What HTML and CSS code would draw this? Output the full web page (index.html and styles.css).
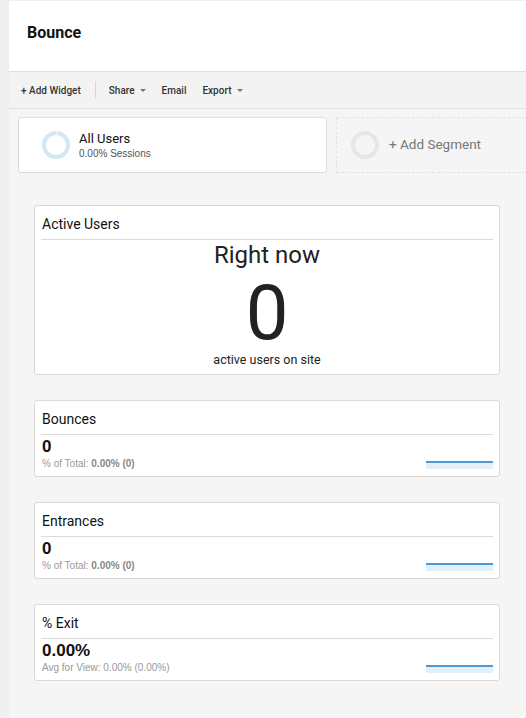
FILE: index.html
```html
<!DOCTYPE html>
<html lang="en">
<head>
    <meta charset="UTF-8">
    <meta name="viewport" content="width=device-width, initial-scale=1.0">
    <title>Bounce</title>
    <link rel="stylesheet" href="styles.css">
</head>
<body>

<div class="page">
    <header class="report-header">
        <h1>Bounce</h1>
    </header>

    <nav class="toolbar">
        <span class="tool">+ Add Widget</span>
        <span class="tool-sep"></span>
        <span class="tool">Share <span class="caret"></span></span>
        <span class="tool">Email</span>
        <span class="tool">Export <span class="caret"></span></span>
    </nav>

    <main>
        <div class="segments">
            <div class="segment">
                <svg class="ring" width="30" height="30" viewBox="0 0 30 30">
                    <circle cx="15" cy="15" r="12" fill="none" stroke="#d3e7f4" stroke-width="4"/>
                    <path d="M15 3 A12 12 0 0 1 17 3.2" fill="none" stroke="#e6f1f9" stroke-width="4"/>
                </svg>
                <div class="segment-text">
                    <div class="segment-name">All Users</div>
                    <div class="segment-sub">0.00% Sessions</div>
                </div>
            </div>
            <div class="segment add">
                <svg class="ring" width="30" height="30" viewBox="0 0 30 30">
                    <circle cx="15" cy="15" r="12" fill="none" stroke="#e6e6e6" stroke-width="4"/>
                </svg>
                <span class="add-label">+ Add Segment</span>
            </div>
        </div>

        <div class="widgets">
            <div class="widget">
                <div class="widget-title">Active Users</div>
                <div class="realtime">
                    <div class="rt-label">Right now</div>
                    <div class="rt-count">0</div>
                    <div class="rt-sub">active users on site</div>
                </div>
            </div>

            <div class="widget">
                <div class="widget-title">Bounces</div>
                <div class="metric">
                    <div>
                        <div class="metric-value">0</div>
                        <div class="metric-sub">% of Total: <b>0.00% (0)</b></div>
                    </div>
                    <div class="spark"></div>
                </div>
            </div>

            <div class="widget">
                <div class="widget-title">Entrances</div>
                <div class="metric">
                    <div>
                        <div class="metric-value">0</div>
                        <div class="metric-sub">% of Total: <b>0.00% (0)</b></div>
                    </div>
                    <div class="spark"></div>
                </div>
            </div>

            <div class="widget">
                <div class="widget-title">% Exit</div>
                <div class="metric">
                    <div>
                        <div class="metric-value">0.00%</div>
                        <div class="metric-sub">Avg for View: 0.00% (0.00%)</div>
                    </div>
                    <div class="spark"></div>
                </div>
            </div>
        </div>
    </main>
</div>

</body>
</html>
```

FILE: styles.css
```css
body {
    font-family: Roboto, Arial, sans-serif;
    margin: 0;
    background-color: #efefef;
    color: #222;
}
.page {
    margin-left: 9px;
    padding-top: 1px;
    min-height: 717px;
    display: flex;
    flex-direction: column;
}
.report-header {
    background-color: white;
    height: 71px;
    box-sizing: border-box;
    border-bottom: 1px solid #dedede;
    padding: 22px 0 0 18px;
}
.report-header h1 {
    margin: 0;
    font-size: 16px;
    line-height: 19px;
    font-weight: bold;
    color: #111;
}
.toolbar {
    background-color: #f3f3f3;
    height: 36px;
    border-bottom: 1px solid #e2e2e2;
    display: flex;
    align-items: center;
    padding-left: 12px;
    font-size: 10px;
    font-weight: 500;
    color: #333;
}
.tool {
    margin-right: 16px;
    display: flex;
    align-items: center;
}
.tool-sep {
    width: 1px;
    height: 18px;
    background-color: #d6d6d6;
    margin-right: 13px;
    margin-left: -2px;
}
.caret {
    display: inline-block;
    margin-left: 5px;
    border-left: 3.5px solid transparent;
    border-right: 3.5px solid transparent;
    border-top: 3.5px solid #777;
}
main {
    flex: 1;
    background-color: #f5f5f5;
    padding: 8px 0 20px 9px;
}
.segments {
    display: flex;
    gap: 9px;
}
.segment {
    width: 309px;
    height: 56px;
    box-sizing: border-box;
    background-color: white;
    border: 1px solid #dcdcdc;
    border-radius: 3px;
    display: flex;
    align-items: center;
    padding-left: 22px;
}
.segment.add {
    flex: 1;
    width: auto;
    padding-left: 13px;
    background-color: transparent;
    border: 1px dashed #e2e2e2;
    border-right: none;
    border-radius: 0;
}
.ring {
    margin-right: 8px;
}
.segment-name {
    font-size: 13px;
    color: #111;
    line-height: 16px;
}
.segment-sub {
    font-family: Arial, sans-serif;
    font-size: 10px;
    color: #555;
    line-height: 13px;
}
.add-label {
    font-size: 13.5px;
    color: #777;
    margin-left: 1px;
    margin-top: -3px;
}
.widgets {
    margin: 32px 26px 0 16px;
    display: flex;
    flex-direction: column;
    gap: 25px;
}
.widget {
    background-color: white;
    border: 1px solid #d9d9d9;
    border-radius: 3px;
    padding: 0 6px 6px 6px;
}
.widget-title {
    font-size: 14px;
    line-height: 17px;
    padding: 10px 0 6px 1px;
    border-bottom: 1px solid #dadada;
    color: #111;
}
.realtime {
    text-align: center;
}
.rt-label {
    font-size: 24px;
    line-height: 28px;
    margin-top: 1px;
    color: #222;
}
.rt-count {
    font-size: 76px;
    line-height: 70px;
    margin-top: 9px;
    color: #222;
}
.rt-sub {
    font-size: 12.5px;
    line-height: 16px;
    margin-top: 4px;
    color: #222;
}
.metric {
    display: flex;
    justify-content: space-between;
    align-items: flex-end;
    padding-left: 1px;
}
.metric-value {
    font-family: Arial, sans-serif;
    font-size: 17px;
    font-weight: bold;
    line-height: 20px;
    margin-top: 2px;
    color: #111;
}
.metric-sub {
    font-family: Arial, sans-serif;
    font-size: 10px;
    line-height: 13px;
    color: #999;
}
.metric-sub b {
    color: #888;
}
.spark {
    width: 67px;
    height: 6px;
    border-top: 2px solid #4a9ad8;
    background-color: #e3f0fa;
    margin-bottom: 1px;
}
```
